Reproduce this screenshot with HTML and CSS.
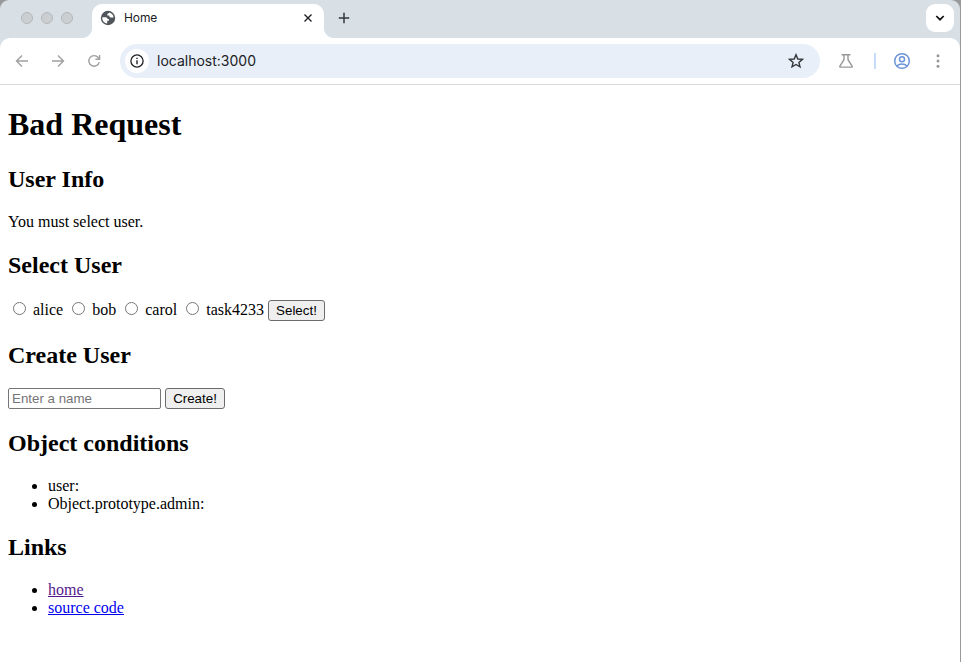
FILE: index.html
```html
<!DOCTYPE html>
<html lang="en">
<head>
<meta charset="utf-8">
<title>Home</title>
<link rel="stylesheet" href="styles.css">
</head>
<body>
<div class="window">
  <header class="tabstrip">
    <div class="lights"><i></i><i></i><i></i></div>
    <div class="tab">
      <svg class="globe" width="16" height="16" viewBox="0 0 16 16"><circle cx="8" cy="8" r="7.200" fill="#50555b"/><path d="M2.300 7.200h3.200c1.500 0 2 .8 2 1.800h1.400v1.700H7.200v2.700C4 13.200 2 10.400 2.300 7.200zM9.300 2.400c-.2 1-2 .8-2 2v1.100h1.900c0 1.600.9 2 2.100 2h2.300c-.2-2.700-1.900-4.600-4.300-5.100z" fill="#fff"/></svg>
      <span class="tab-title">Home</span>
      <svg class="close" width="10" height="10" viewBox="0 0 10 10"><path d="M1.500 1.500l7 7M8.500 1.500l-7 7" stroke="#202124" stroke-width="1.400"/></svg>
    </div>
    <svg class="plus" width="12" height="12" viewBox="0 0 12 12"><path d="M6 .8v10.400M.8 6h10.400" stroke="#35383b" stroke-width="1.500"/></svg>
    <div class="tab-search"><svg width="10" height="8" viewBox="0 0 10 8"><path d="M1.300 2L5 5.700 8.700 2" fill="none" stroke="#111" stroke-width="1.700"/></svg></div>
  </header>
  <nav class="toolbar">
    <svg class="nav-icon" width="14" height="14" viewBox="0 0 14 14"><path d="M13 7H1.800M7 1.500L1.500 7 7 12.500"/></svg>
    <svg class="nav-icon forward" width="14" height="14" viewBox="0 0 14 14"><path d="M1 7h11.200M7 1.500L12.500 7 7 12.500"/></svg>
    <svg class="nav-icon reload" width="14" height="14" viewBox="0 0 14 14"><path d="M12.300 8.200A5.300 5.300 0 1 1 11.200 3.500l1.300 1.600M12.600 1v4.200H8.400"/></svg>
    <div class="omnibox">
      <span class="site-info"><svg width="14" height="14" viewBox="0 0 14 14"><circle cx="7" cy="7" r="6.100" fill="none" stroke="#202124" stroke-width="1.300"/><path d="M7 6.200v4M7 3.700v1.400" stroke="#202124" stroke-width="1.400"/></svg></span>
      <span class="url">localhost:3000</span>
      <svg width="16" height="16" viewBox="0 0 16 16"><path d="M8 1.700l1.800 4.300 4.600.4-3.500 3 1.100 4.500L8 11.500l-4 2.400 1.100-4.500-3.500-3L6.200 6z" fill="none" stroke="#35383b" stroke-width="1.400"/></svg>
    </div>
    <svg class="flask" width="16" height="16" viewBox="0 0 16 16"><path d="M3.500 1.700h9M6 1.700v5L1.900 13.100q-.5 1 .6 1h11q1.100 0 .6-1L10 6.700v-5" fill="none" stroke="#999" stroke-width="1.400"/></svg>
    <i class="divider"></i>
    <svg class="profile" width="18" height="18" viewBox="0 0 18 18"><g fill="none" stroke="#6c94d9" stroke-width="1.500"><circle cx="9" cy="9" r="7.300"/><circle cx="9" cy="7.200" r="2.500"/><path d="M3.900 14.100c2.700-2.800 7.500-2.800 10.200 0"/></g></svg>
    <svg class="more" width="4" height="16" viewBox="0 0 4 16" fill="#999"><circle cx="2" cy="2.800" r="1.500"/><circle cx="2" cy="8" r="1.500"/><circle cx="2" cy="13.200" r="1.500"/></svg>
  </nav>
  <main>
    <h1>Bad Request</h1>
    <h2>User Info</h2>
    <p>You must select user.</p>
    <h2>Select User</h2>
    <form class="select-form">
      <input type="radio" name="user" id="u1"> <label for="u1">alice</label>
      <input type="radio" name="user" id="u2"> <label for="u2">bob</label>
      <input type="radio" name="user" id="u3"> <label for="u3">carol</label>
      <input type="radio" name="user" id="u4"> <label for="u4">task4233</label>
      <button class="select-button" type="button">Select!</button>
    </form>
    <h2>Create User</h2>
    <form class="create-form">
      <input class="name" type="text" placeholder="Enter a name">
      <button class="create-button" type="button">Create!</button>
    </form>
    <h2>Object conditions</h2>
    <ul><li>user:</li><li>Object.prototype.admin:</li></ul>
    <h2>Links</h2>
    <ul><li><a class="visited" href="#">home</a></li><li><a href="#">source code</a></li></ul>
  </main>
</div>
</body>
</html>
```
FILE: styles.css
```css
* { box-sizing: border-box; }
body {
  margin: 0;
  background: #999;
  overflow: hidden;
}
.window {
  width: 960px;
  height: 662px;
  background: #d8dfe5;
  border-radius: 9px 9px 0 0;
  overflow: hidden;
  display: flex;
  flex-direction: column;
}
svg { display: block; flex: none; }
.tabstrip {
  height: 38px;
  flex: none;
  display: flex;
  align-items: flex-start;
  font-family: Inter, sans-serif;
}
.lights {
  display: flex;
  gap: 8px;
  width: 92px;
  padding: 12px 0 0 21px;
}
.lights i {
  width: 12px;
  height: 12px;
  border-radius: 50%;
  background: #cccfd1;
  border: 1px solid #b5b8ba;
}
.tab {
  position: relative;
  width: 232px;
  height: 34px;
  margin-top: 4px;
  padding: 0 11px 6px 8px;
  background: #fff;
  border-radius: 10px 10px 0 0;
  display: flex;
  align-items: center;
}
.tab::before, .tab::after {
  content: "";
  position: absolute;
  bottom: 0;
  width: 10px;
  height: 10px;
}
.tab::before {
  left: -10px;
  background: radial-gradient(circle at 0 0, transparent 9.500px, #fff 10.500px);
}
.tab::after {
  right: -10px;
  background: radial-gradient(circle at 100% 0, transparent 9.500px, #fff 10.500px);
}
.tab-title {
  margin-left: 8px;
  flex: 1;
  font-size: 12px;
  line-height: 16px;
  letter-spacing: -0.1px;
  color: #202124;
}
.plus { margin: 12px 0 0 14px; }
.tab-search {
  width: 28px;
  height: 28px;
  margin: 4px 6px 0 auto;
  border-radius: 9px;
  background: #fff;
  display: flex;
  align-items: center;
  justify-content: center;
}
.toolbar {
  height: 47px;
  flex: none;
  background: #fff;
  border-bottom: 1px solid #d9d9d9;
  border-radius: 10px 10px 0 0;
  padding-left: 15px;
  display: flex;
  align-items: center;
}
.nav-icon { fill: none; stroke: #a0a0a0; stroke-width: 1.400; }
.forward { margin-left: 22px; }
.reload { margin-left: 22px; }
.omnibox {
  width: 700px;
  height: 34px;
  margin-left: 19px;
  padding: 0 16px 0 5px;
  border-radius: 17px;
  background: #e8eff9;
  display: flex;
  align-items: center;
}
.site-info {
  width: 24px;
  height: 24px;
  border-radius: 50%;
  background: #fff;
  display: flex;
  align-items: center;
  justify-content: center;
}
.url {
  margin-left: 8px;
  flex: 1;
  font: 14px/18px Inter, sans-serif;
  color: #202124;
}
.flask { margin-left: 18px; }
.divider {
  width: 2px;
  height: 16px;
  margin-left: 20px;
  background: #c7dcf8;
}
.profile { margin-left: 17px; }
.more { margin-left: 25px; }
main {
  flex: 1;
  background: #fff;
  padding: 0 8px;
  font: 16px/18px "Liberation Serif", serif;
  color: #000;
}
h1 { font-size: 32px; line-height: 37px; margin: 21px 0 22px; }
h2 { font-size: 24px; line-height: 28px; margin: 20px 0; }
p { margin: 0; }
ul { margin: 0; padding-left: 40px; }
form { margin: 0; }
.select-form { height: 22px; }
.create-form { height: 21px; margin-top: -1px; }
input, button { font: 13.333px/15px "Liberation Sans", sans-serif; }
button {
  height: 21px;
  padding: 1px 6px;
  border: 1px solid #6b6b6b;
  border-radius: 3px;
  background: #efefef;
  color: #000;
}
.select-button { width: 57px; }
.create-button { width: 60px; }
.name {
  width: 153px;
  height: 21px;
  padding: 1px 3px;
  border: 1px solid #767676;
  border-radius: 2px;
}
a { color: #0000ee; }
a.visited { color: #551a8b; }
```
